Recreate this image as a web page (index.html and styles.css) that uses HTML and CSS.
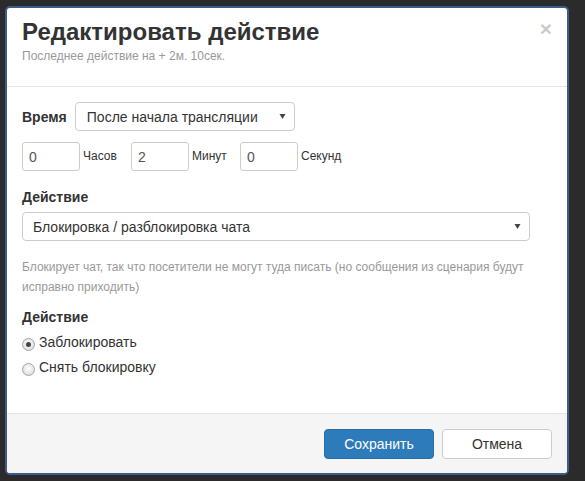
FILE: index.html
```html
<!DOCTYPE html>
<html lang="ru">
<head>
<meta charset="utf-8">
<title>Редактировать действие</title>
<link rel="stylesheet" href="styles.css">
</head>
<body>
<div class="modal">
  <div class="modal-header">
    <div class="titles">
      <h4 class="title">Редактировать действие</h4>
      <div class="subtitle">Последнее действие на + 2м. 10сек.</div>
    </div>
    <button class="close" type="button">×</button>
  </div>
  <div class="modal-body">
    <div class="time-row">
      <span class="lbl">Время</span>
      <div class="select sel-time">
        <span>После начала трансляции</span>
        <svg class="caret" width="7" height="5" viewBox="0 0 7 5"><polygon points="0.5,0 6.5,0 3.5,5" fill="#444"/></svg>
      </div>
    </div>
    <div class="inputs-row">
      <div class="cell"><input class="inp" type="text" value="0"><span class="unit">Часов</span></div>
      <div class="cell"><input class="inp" type="text" value="2"><span class="unit">Минут</span></div>
      <div class="cell"><input class="inp" type="text" value="0"><span class="unit">Секунд</span></div>
    </div>
    <div class="lbl block first">Действие</div>
    <div class="select sel-action">
      <span>Блокировка / разблокировка чата</span>
      <svg class="caret" width="7" height="5" viewBox="0 0 7 5"><polygon points="0.5,0 6.5,0 3.5,5" fill="#444"/></svg>
    </div>
    <p class="help">Блокирует чат, так что посетители не могут туда писать (но сообщения из сценария будут исправно приходить)</p>
    <div class="lbl block second">Действие</div>
    <div class="radio"><span class="rb checked"></span><span>Заблокировать</span></div>
    <div class="radio"><span class="rb"></span><span>Снять блокировку</span></div>
  </div>
  <div class="modal-footer">
    <button class="btn primary" type="button">Сохранить</button>
    <button class="btn default" type="button">Отмена</button>
  </div>
</div>
</body>
</html>
```

FILE: styles.css
```css
html, body {
  margin: 0;
  height: 100%;
}
body {
  background: #2b2b2b;
  padding: 6px 0 0 5px;
  box-sizing: border-box;
  font-family: "Liberation Sans", Arial, sans-serif;
  color: #333;
  overflow: hidden;
}
.modal {
  width: 564px;
  height: 469px;
  box-sizing: border-box;
  border: 2px solid #3e5c8a;
  border-radius: 5px;
  background: #fff;
  display: flex;
  flex-direction: column;
  overflow: hidden;
}
.modal-header {
  height: 79px;
  box-sizing: border-box;
  padding: 11px 15px 0 15px;
  border-bottom: 1px solid #e5e5e5;
  display: flex;
  justify-content: space-between;
  align-items: flex-start;
}
.title {
  margin: 0;
  font-size: 24px;
  line-height: 26px;
  font-weight: bold;
  color: #333;
}
.subtitle {
  margin-top: 3px;
  font-size: 12px;
  line-height: 17px;
  color: #999;
}
.close {
  margin: -1px 0 0 0;
  padding: 0;
  border: 0;
  background: none;
  font-family: "Liberation Sans", Arial, sans-serif;
  font-size: 21px;
  font-weight: bold;
  line-height: 21px;
  color: #000;
  opacity: 0.2;
  cursor: pointer;
}
.modal-body {
  flex: 1;
  padding: 15px;
  display: flex;
  flex-direction: column;
  align-items: flex-start;
}
.lbl {
  font-size: 14px;
  font-weight: bold;
  line-height: 20px;
  color: #333;
}
.time-row {
  display: flex;
  align-items: center;
  height: 29px;
}
.time-row .lbl {
  margin-right: 8px;
}
.select {
  box-sizing: border-box;
  height: 29px;
  border: 1px solid #ccc;
  border-radius: 4px;
  background: #fff;
  display: flex;
  align-items: center;
  justify-content: space-between;
  font-size: 14px;
  color: #333;
  padding: 0 8px 0 11px;
}
.sel-time {
  width: 220px;
}
.sel-action {
  width: 508px;
  padding-left: 10px;
}
.inputs-row {
  margin-top: 11px;
  display: grid;
  grid-template-columns: repeat(3, 109px);
}
.cell {
  display: flex;
  align-items: center;
}
.inp {
  box-sizing: border-box;
  width: 58px;
  height: 29px;
  margin: 0;
  border: 1px solid #ccc;
  border-radius: 3px;
  padding: 0 0 0 6px;
  font-family: "Liberation Sans", Arial, sans-serif;
  font-size: 14px;
  color: #555;
  background: #fff;
}
.unit {
  margin-left: 3px;
  font-size: 12px;
  line-height: 17px;
  color: #333;
}
.lbl.first {
  margin-top: 16px;
  margin-bottom: 5px;
}
.help {
  margin: 16px 0 0 0;
  font-size: 12px;
  line-height: 20px;
  color: #999;
}
.lbl.second {
  margin-top: 10px;
  margin-bottom: 5px;
}
.radio {
  display: flex;
  align-items: center;
  height: 20px;
  font-size: 14px;
  color: #333;
  margin-bottom: 5px;
}
.rb {
  box-sizing: border-box;
  width: 13px;
  height: 13px;
  margin: 4px 4px 0 0;
  border-radius: 50%;
  border: 1px solid #a3a3a3;
  background: radial-gradient(circle at 50% 40%, #fdfdfd 0%, #e6e6e6 60%, #d4d4d4 100%);
  display: flex;
  align-items: center;
  justify-content: center;
}
.rb.checked::after {
  content: "";
  width: 5px;
  height: 5px;
  border-radius: 50%;
  background: #444;
}
.modal-footer {
  height: 60px;
  box-sizing: border-box;
  border-top: 1px solid #e5e5e5;
  background: #f5f5f5;
  padding: 15px 15px 0 15px;
  display: flex;
  justify-content: flex-end;
  align-items: flex-start;
  gap: 8px;
}
.btn {
  box-sizing: border-box;
  width: 110px;
  height: 30px;
  margin: 0;
  border-radius: 4px;
  font-family: "Liberation Sans", Arial, sans-serif;
  font-size: 14px;
  cursor: pointer;
}
.primary {
  background: #2e7bbb;
  border: 1px solid #2a6da4;
  color: #fff;
}
.default {
  background: #fff;
  border: 1px solid #ccc;
  color: #333;
}
```
